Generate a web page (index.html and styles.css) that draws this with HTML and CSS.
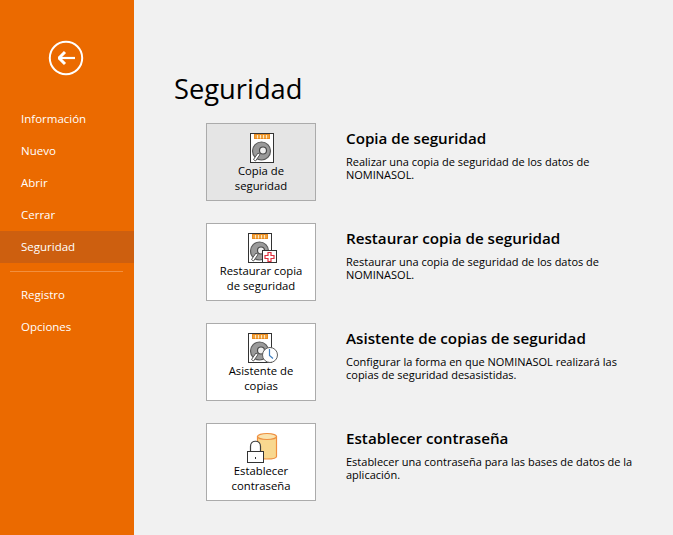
FILE: index.html
```html
<!DOCTYPE html>
<html lang="es">
<head>
    <meta charset="UTF-8">
    <title>Seguridad</title>
    <link rel="stylesheet" href="styles.css">
</head>
<body>
    <svg class="defs" width="0" height="0">
        <defs>
            <g id="disk">
                <rect x="0.500" y="0.500" width="23" height="29" fill="#fff" stroke="#333"/>
                <rect x="4.500" y="1.500" width="15" height="4" fill="#f2a33c" stroke="#e88a20" stroke-width="1"/>
                <path d="M7.500 2v3.500M10.500 2v3.500M13.500 2v3.500M16.500 2v3.500" stroke="#fce6c4" stroke-width="1"/>
                <circle cx="11.500" cy="18" r="9" fill="#9a9a9a" stroke="#5a5a5a" stroke-width="1.200"/>
                <circle cx="13" cy="17.500" r="3.500" fill="#efefef" stroke="#4a4a4a" stroke-width="1.200"/>
                <path d="M8 20l-4.500 6.500 2 1.500 4.500-6.500z" fill="#fff" stroke="#555"/>
            </g>
        </defs>
    </svg>

    <nav class="sidebar">
        <div class="back">
            <svg width="36" height="36" viewBox="0 0 36 36">
                <circle cx="18" cy="18" r="16.200" fill="none" stroke="#fff" stroke-width="2"/>
                <path d="M10 18h17" stroke="#fff" stroke-width="2.200" fill="none"/>
                <path d="M11 18l6-6M11 18l6 6" stroke="#fff" stroke-width="3" fill="none"/>
            </svg>
        </div>
        <ul class="menu">
            <li>Información</li>
            <li>Nuevo</li>
            <li>Abrir</li>
            <li>Cerrar</li>
            <li class="active">Seguridad</li>
        </ul>
        <div class="divider"></div>
        <ul class="menu">
            <li>Registro</li>
            <li>Opciones</li>
        </ul>
    </nav>

    <main class="content">
        <h1>Seguridad</h1>

        <section class="row">
            <button class="tile selected">
                <svg class="icon" width="44" height="33" viewBox="0 0 44 33">
                    <use href="#disk" x="11" y="1"/>
                </svg>
                <span>Copia de<br>seguridad</span>
            </button>
            <div class="info">
                <h2>Copia de seguridad</h2>
                <p>Realizar una copia de seguridad de los datos de NOMINASOL.</p>
            </div>
        </section>

        <section class="row">
            <button class="tile">
                <svg class="icon" width="44" height="33" viewBox="0 0 44 33">
                    <use href="#disk" x="9" y="1"/>
                    <rect x="23.500" y="18.500" width="14" height="12" fill="#fff" stroke="#333"/>
                    <path d="M29 20.500h3v3h3v3h-3v3h-3v-3h-3v-3h3z" fill="#fff" stroke="#e0303f" stroke-width="1.200"/>
                </svg>
                <span>Restaurar copia<br>de seguridad</span>
            </button>
            <div class="info">
                <h2>Restaurar copia de seguridad</h2>
                <p>Restaurar una copia de seguridad de los datos de NOMINASOL.</p>
            </div>
        </section>

        <section class="row">
            <button class="tile">
                <svg class="icon" width="44" height="33" viewBox="0 0 44 33">
                    <use href="#disk" x="9" y="1"/>
                    <circle cx="31" cy="23" r="7.500" fill="#fff" stroke="#606060"/>
                    <path d="M30.500 17v6.500l3.500 3" fill="none" stroke="#3f7fc0" stroke-width="1.200"/>
                </svg>
                <span>Asistente de<br>copias</span>
            </button>
            <div class="info">
                <h2>Asistente de copias de seguridad</h2>
                <p>Configurar la forma en que NOMINASOL realizará las copias de seguridad desasistidas.</p>
            </div>
        </section>

        <section class="row">
            <button class="tile">
                <svg class="icon" width="44" height="33" viewBox="0 0 44 33">
                    <path d="M18.500 4.500v20c0 1.500 4.500 2.500 9.500 2.500s9.500-1 9.500-2.500v-20z" fill="#f8d88f" stroke="#ee8f3f" stroke-width="1.200"/>
                    <ellipse cx="28" cy="4.500" rx="9.500" ry="3" fill="#fae3ae" stroke="#ee8f3f" stroke-width="1.200"/>
                    <path d="M11.500 19.500v-5c0-7 10-7 10 0v5" fill="#fff" stroke="#404040" stroke-width="1.200"/>
                    <rect x="8.500" y="19.500" width="16" height="11" fill="#fff" stroke="#333"/>
                    <rect x="16" y="25" width="1" height="2" fill="#333"/>
                </svg>
                <span>Establecer<br>contraseña</span>
            </button>
            <div class="info">
                <h2>Establecer contraseña</h2>
                <p>Establecer una contraseña para las bases de datos de la aplicación.</p>
            </div>
        </section>
    </main>
</body>
</html>
```

FILE: styles.css
```css
body {
    margin: 0;
    height: 535px;
    overflow: hidden;
    display: flex;
    background: #f1f1f1;
    color: #000;
    font-family: "Open Sans", "Noto Sans", sans-serif;
}

.defs {
    display: none;
}

/* Barra lateral */
.sidebar {
    width: 134px;
    flex-shrink: 0;
    background: #eb6a00;
    color: #fff;
}

.back {
    display: flex;
    justify-content: center;
    padding: 40px 3px 0 0;
    height: 63px;
}

.menu {
    list-style: none;
    margin: 0;
    padding: 0;
    font-size: 11.500px;
}

.menu li {
    height: 32px;
    line-height: 31px;
    padding-left: 21px;
}

.menu .active {
    background: #cd5f0f;
}

.divider {
    height: 1px;
    margin: 8px 11px 7px 10px;
    background: #f28f3e;
}

/* Contenido */
.content {
    flex: 1;
    padding: 0 0 0 40px;
}

h1 {
    margin: 0;
    padding-top: 70px;
    height: 53px;
    font-size: 27.300px;
    line-height: 38px;
    font-weight: 400;
    box-sizing: content-box;
}

.row {
    display: flex;
    height: 100px;
    padding-left: 32px;
}

.tile {
    width: 110px;
    height: 78px;
    box-sizing: border-box;
    padding: 8px 0 0;
    flex-shrink: 0;
    display: flex;
    flex-direction: column;
    align-items: center;
    border: 1px solid #ababab;
    background: #fff;
    color: #000;
    font-family: inherit;
    font-size: 11.300px;
    line-height: 15px;
    text-align: center;
}

.tile.selected {
    background: #e5e5e5;
}

.icon {
    display: block;
    margin-bottom: -2px;
}

.info {
    margin-left: 30px;
    width: 292px;
}

h2 {
    margin: 5px 0 0;
    font-size: 15.200px;
    line-height: 20px;
    font-weight: 600;
}

.info p {
    margin: 7px 0 0;
    font-size: 11px;
    line-height: 13px;
}
```
